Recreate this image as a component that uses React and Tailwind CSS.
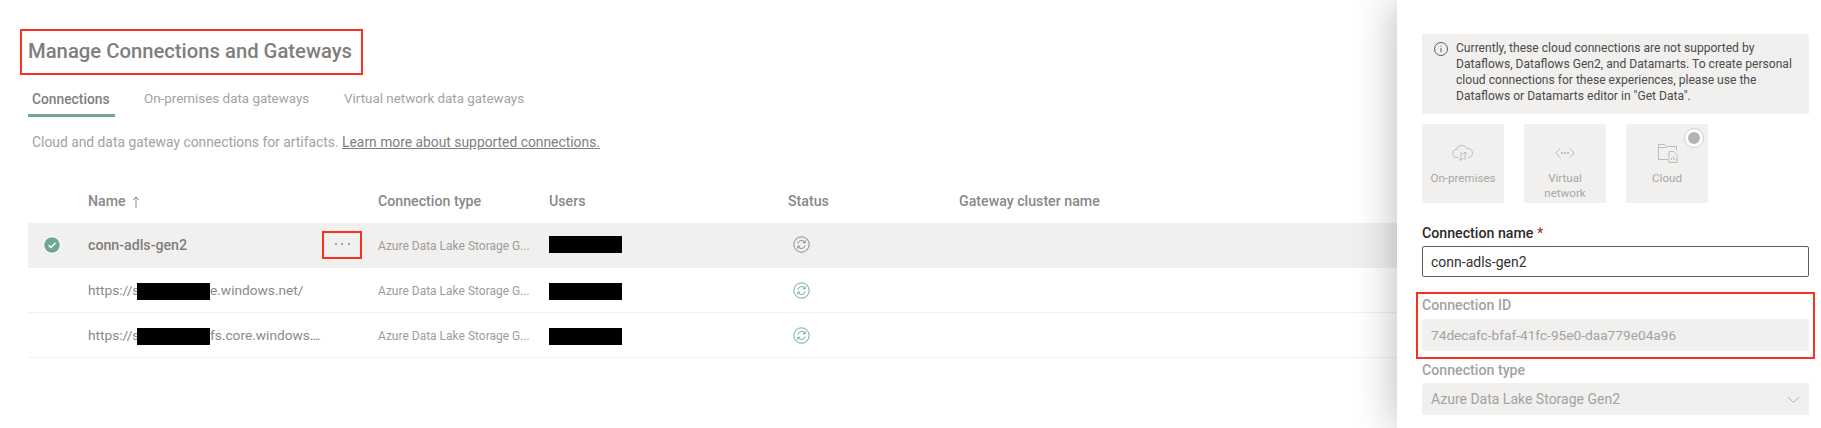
const F = '[font-family:Roboto,"Noto_Sans",sans-serif]';

function Sync({ color }) {
  return (
    <svg width="17" height="17" viewBox="0 0 17 17" fill="none" stroke={color} strokeWidth="1">
      <circle cx="8.5" cy="8.5" r="7.7" />
      <path d="M4.8 7.6a3.8 3.8 0 0 1 6.5-1.9l.9.9" />
      <path d="M12.2 4.4v2.4H9.8" />
      <path d="M12.2 9.4a3.8 3.8 0 0 1-6.5 1.9l-.9-.9" />
      <path d="M4.8 12.6v-2.4h2.4" />
    </svg>
  );
}

function Row({ selected, name }) {
  return (
    <div className={`grid h-[45px] grid-cols-[60px_290px_171px_239px_171px_1fr] items-center border-b ${selected ? "border-[#f1f0ee] bg-[#f1f0ee]" : "border-[#f1f1f0] bg-white"}`}>
      <div className="flex justify-center pr-[12px]">
        {selected && (
          <svg width="18" height="18" viewBox="0 0 18 18">
            <circle cx="9" cy="9" r="8.8" fill="#fff" />
            <circle cx="9" cy="9" r="7.8" fill="#6fa89b" />
            <path d="M5.6 9.3l2.3 2.2 4.6-4.6" fill="none" stroke="#fff" strokeWidth="1.5" />
          </svg>
        )}
      </div>
      <div className="flex items-center justify-between pr-[16px]">
        {name}
        {selected && (
          <div className="flex h-[28px] w-[40px] items-center justify-center gap-[4.5px] border-2 border-[#f9301f] pb-[2px]">
            <span className="h-[2px] w-[2px] rounded-full bg-[#8b8a89]" />
            <span className="h-[2px] w-[2px] rounded-full bg-[#8b8a89]" />
            <span className="h-[2px] w-[2px] rounded-full bg-[#8b8a89]" />
          </div>
        )}
      </div>
      <div className="truncate pr-[12px] pt-[3px] text-[12px] text-[#9d9c9b]">Azure Data Lake Storage G...</div>
      <div className={selected ? "pb-[1px]" : "pt-[3px]"}>
        <div className="h-[17px] w-[73px] bg-black" />
      </div>
      <div className={selected ? "pl-[5px]" : "pl-[5px] pt-[1px]"}>
        <Sync color={selected ? "#8a8988" : "#6fa89b"} />
      </div>
      <div />
    </div>
  );
}

function RedactedName({ before, children }) {
  return (
    <div className="flex items-center pt-[1px] text-[13.7px] text-[#8a8988]">
      <span className="w-[49px]">{before}</span>
      <span className="mt-[2px] h-[17px] w-[73px] bg-black" />
      <span>{children}</span>
    </div>
  );
}

function Tile({ icon, label, radio }) {
  return (
    <div className="relative flex h-[79px] w-[82px] flex-col items-center bg-[#f1f0ee] pt-[17px] text-center text-[11.6px] leading-[15px] text-[#a8a7a6]">
      <div className="flex h-[24px] items-center justify-center">{icon}</div>
      <div className="mt-[6px]">{label}</div>
      {radio && (
        <div className="absolute right-[4px] top-[4px] flex h-[20px] w-[20px] items-center justify-center rounded-full border border-[#d2d1d0] bg-white">
          <div className="h-[12px] w-[12px] rounded-full bg-[#b4b3b2]" />
        </div>
      )}
    </div>
  );
}

const iconCloud = (
  <svg width="22" height="18" viewBox="0 0 22 18" fill="none" stroke="#bdbcbb" strokeWidth="1">
    <path d="M6 13.5H5a4 4 0 0 1-.4-8A5.5 5.5 0 0 1 15 4.6a4.5 4.5 0 0 1 2 8.9h-1" />
    <path d="M9 8v8.5M6.7 14.3 9 16.5l2.2-2.2" />
    <path d="M13 16.5V8M10.8 10.2 13 8l2.2 2.2" />
  </svg>
);
const iconNet = (
  <svg width="20" height="12" viewBox="0 0 20 12" fill="none" stroke="#bdbcbb" strokeWidth="1">
    <path d="M5 1.5 1 6l4 4.5M15 1.5 19 6l-4 4.5" />
    <circle cx="7" cy="6" r=".7" fill="#bdbcbb" />
    <circle cx="10" cy="6" r=".7" fill="#bdbcbb" />
    <circle cx="13" cy="6" r=".7" fill="#bdbcbb" />
  </svg>
);
const iconFolder = (
  <svg width="21" height="20" viewBox="0 0 21 20" fill="none" stroke="#bdbcbb" strokeWidth="1">
    <path d="M11 16.5H1.5v-15h6l2 2h10v4" />
    <path d="M1.5 4.5h8" />
    <path d="M12 8.5h5l3 3v8h-8z" />
    <path d="M14.5 17v-2M16.5 17v-4M18.3 17v-1" />
  </svg>
);

export default function App() {
  return (
    <div className={`flex h-[428px] w-[1821px] overflow-hidden bg-white ${F}`}>
      <main className="min-w-0 flex-1 pl-[28px] pt-[29px]">
        <div className="-ml-[8px] flex h-[46px] w-[343px] items-center border-2 border-[#f9301f] pb-[1px] pl-[6px]">
          <h1 className="whitespace-nowrap text-[20.25px] font-medium text-[#7f7e7d]">Manage Connections and Gateways</h1>
        </div>
        <nav className="mt-[12px] flex h-[30px] pt-[2px] text-[13.4px]">
          <div className="-mt-[2px] h-[30px] w-[87px] border-b-[3px] border-[#6fa89b] pl-[4px] pt-[2px] text-[13.8px] font-medium text-[#807f7e]">Connections</div>
          <div className="ml-[29px] w-[200px] text-[#a3a2a1]">On-premises data gateways</div>
          <div className="text-[#a3a2a1]">Virtual network data gateways</div>
        </nav>
        <p className="mt-[15px] pl-[4px] text-[13.85px] text-[#a3a2a1]">
          Cloud and data gateway connections for artifacts.{" "}
          <span className="text-[#807f7e] underline">Learn more about supported connections.</span>
        </p>
        <div className="mt-[29px] grid h-[41px] grid-cols-[60px_290px_171px_239px_171px_1fr] items-center pb-[1px] text-[14.2px] font-medium text-[#8a8988]">
          <div />
          <div className="flex items-center gap-[6px]">
            Name
            <svg width="8" height="12" viewBox="0 0 8 12" fill="none" stroke="#8a8988" strokeWidth="1"><path d="M4 12V1M.8 4.2 4 1l3.2 3.2" /></svg>
          </div>
          <div>Connection type</div>
          <div>Users</div>
          <div>Status</div>
          <div>Gateway cluster name</div>
        </div>
        <Row selected name={<span className="pt-[1px] text-[14.2px] font-medium text-[#7f7e7d]">conn-adls-gen2</span>} />
        <Row name={<RedactedName before="https://s">e.windows.net/</RedactedName>} />
        <Row name={<RedactedName before="https://s">fs.core.windows<span className="tracking-[-1.2px]">....</span></RedactedName>} />
      </main>
      <aside className="relative flex w-[424px] flex-col bg-white pl-[25px] pr-[12px] pt-[34px] shadow-[-4px_0_38px_rgba(0,0,0,0.24)]">
        <div className="flex h-[80px] gap-[8px] bg-[#f1f0ee] pl-[12px] pt-[6px] text-[12.1px] leading-[16px] text-[#4c4b4a]">
          <svg className="mt-[2px] shrink-0" width="14" height="14" viewBox="0 0 14 14" fill="none" stroke="#5e5d5c" strokeWidth="1">
            <circle cx="7" cy="7" r="6.5" />
            <path d="M7 6v4.2M7 3.6v1" />
          </svg>
          <div>
            Currently, these cloud connections are not supported by<br />
            Dataflows, Dataflows Gen2, and Datamarts. To create personal<br />
            cloud connections for these experiences, please use the<br />
            Dataflows or Datamarts editor in "Get Data".
          </div>
        </div>
        <div className="mt-[10px] flex gap-[20px]">
          <Tile icon={iconCloud} label="On-premises" />
          <Tile icon={iconNet} label={<>Virtual<br />network</>} />
          <Tile icon={iconFolder} label="Cloud" radio />
        </div>
        <div className="mt-[20px] h-[20px] text-[14.2px] font-medium leading-[20px] text-[#2b2a29]">
          Connection name <span className="text-[#a4373a]">*</span>
        </div>
        <div className="mt-[3px] flex h-[31px] items-center rounded-[2px] border border-[#605e5c] pl-[8px] pt-[1px] text-[14px] text-[#323130]">conn-adls-gen2</div>
        <div className="-mx-[6px] mt-[15px] h-[67px] border-2 border-[#f9301f] px-[4px] pt-[1px]">
          <div className="h-[20px] text-[14.2px] font-medium leading-[20px] text-[#a3a2a1]">Connection ID</div>
          <div className="mt-[4px] flex h-[32px] items-center rounded-[2px] bg-[#f1f0ee] pl-[9px] text-[13.7px] text-[#a3a2a1]">74decafc-bfaf-41fc-95e0-daa779e04a96</div>
        </div>
        <div className="h-[24px] pt-[1px] text-[14.2px] font-medium leading-[20px] text-[#a3a2a1]">Connection type</div>
        <div className="flex h-[32px] items-center justify-between rounded-[2px] bg-[#f1f0ee] pl-[9px] pr-[9px] pt-[1px] text-[14px] text-[#a3a2a1]">
          Azure Data Lake Storage Gen2
          <svg width="13" height="8" viewBox="0 0 13 8" fill="none" stroke="#b0afae" strokeWidth="1"><path d="M1 1l5.5 5.5L12 1" /></svg>
        </div>
      </aside>
    </div>
  );
}
